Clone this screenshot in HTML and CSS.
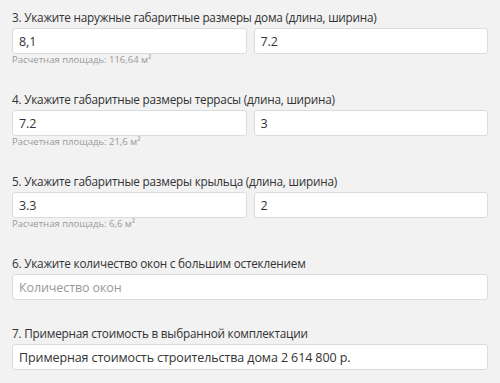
FILE: index.html
```html
<!DOCTYPE html>
<html lang="ru">
<head>
    <meta charset="UTF-8">
    <meta name="viewport" content="width=device-width, initial-scale=1.0">
    <title>Калькулятор стоимости дома</title>
    <link rel="stylesheet" href="styles.css">
</head>
<body>
    <div class="calc">
        <div class="field">
            <label class="field-label">3. Укажите наружные габаритные размеры дома (длина, ширина)</label>
            <div class="field-row">
                <input type="text" class="field-input" value="8,1">
                <input type="text" class="field-input" value="7.2">
            </div>
            <div class="field-note">Расчетная площадь: 116,64 м²</div>
        </div>

        <div class="field">
            <label class="field-label">4. Укажите габаритные размеры террасы (длина, ширина)</label>
            <div class="field-row">
                <input type="text" class="field-input" value="7.2">
                <input type="text" class="field-input" value="3">
            </div>
            <div class="field-note">Расчетная площадь: 21,6 м²</div>
        </div>

        <div class="field">
            <label class="field-label">5. Укажите габаритные размеры крыльца (длина, ширина)</label>
            <div class="field-row">
                <input type="text" class="field-input" value="3.3">
                <input type="text" class="field-input" value="2">
            </div>
            <div class="field-note">Расчетная площадь: 6,6 м²</div>
        </div>

        <div class="field">
            <label class="field-label">6. Укажите количество окон с большим остеклением</label>
            <div class="field-row">
                <input type="text" class="field-input" placeholder="Количество окон">
            </div>
        </div>

        <div class="field">
            <label class="field-label">7. Примерная стоимость в выбранной комплектации</label>
            <div class="field-row">
                <input type="text" class="field-input" value="Примерная стоимость строительства дома 2 614 800 р." readonly>
            </div>
        </div>
    </div>
</body>
</html>
```

FILE: styles.css
```css
/* styles.css */
body {
    font-family: "Open Sans", Arial, sans-serif;
    background-color: #f2f2f2;
    color: #333;
    margin: 0;
    padding: 0;
}

.calc {
    padding: 8px 12px 0 12px;
}

.field {
    margin-bottom: 24px;
}

.field-label {
    display: block;
    font-size: 11.75px;
    letter-spacing: -0.22px;
    line-height: 18px;
    margin-bottom: 2px;
    color: #333;
}

.field-row {
    display: flex;
    gap: 7px;
}

.field-input {
    flex: 1;
    min-width: 0;
    box-sizing: border-box;
    height: 26px;
    padding: 0 6px;
    font-family: "Open Sans", Arial, sans-serif;
    font-size: 12.5px;
    letter-spacing: -0.1px;
    color: #333;
    background-color: #fff;
    border: 1px solid #dcdcdc;
    border-radius: 3px;
    outline: none;
}

.field-input::placeholder {
    color: #999;
}

.field-note {
    font-size: 9.5px;
    line-height: 12px;
    color: #999;
}
```
